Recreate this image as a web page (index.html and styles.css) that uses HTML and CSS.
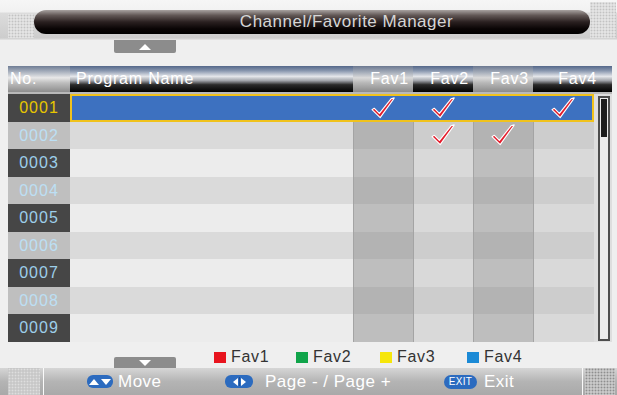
FILE: index.html
```html
<!DOCTYPE html>
<html>
<head>
<meta charset="utf-8">
<link rel="stylesheet" href="styles.css">
</head>
<body>
<div class="screen">
  <div class="top">
    <div class="dots dots-l"></div>
    <div class="pill">Channel/Favorite Manager</div>
    <div class="dots dots-r"></div>
  </div>
  <div class="tabrow"><div class="tab up"><span class="tri-up"></span></div></div>
  <div class="head">
    <div class="h h-no">No.</div>
    <div class="h h-name">Program Name</div>
    <div class="h h-fav light">Fav1</div>
    <div class="h h-fav">Fav2</div>
    <div class="h h-fav light">Fav3</div>
    <div class="h h-fav last">Fav4</div>
  </div>
  <div class="body">
    <div class="rows">
      <div class="row odd sel"><div class="no">0001</div><div class="cells"><div class="name"></div>
        <div class="fav c1"><svg class="chk" viewBox="0 0 24 22" width="24" height="22"><path d="M1 12.6 L3.2 11.2 L8.4 16.4 L20 1.8 L23.2 0.9 L22.2 2.6 L9.2 20.6 Z" fill="#e41d2c" stroke="#fff" stroke-width="1.1" stroke-linejoin="round"/></svg></div>
        <div class="fav c2"><svg class="chk" viewBox="0 0 24 22" width="24" height="22"><path d="M1 12.6 L3.2 11.2 L8.4 16.4 L20 1.8 L23.2 0.9 L22.2 2.6 L9.2 20.6 Z" fill="#e41d2c" stroke="#fff" stroke-width="1.1" stroke-linejoin="round"/></svg></div>
        <div class="fav c3"></div>
        <div class="fav c4"><svg class="chk" viewBox="0 0 24 22" width="24" height="22"><path d="M1 12.6 L3.2 11.2 L8.4 16.4 L20 1.8 L23.2 0.9 L22.2 2.6 L9.2 20.6 Z" fill="#e41d2c" stroke="#fff" stroke-width="1.1" stroke-linejoin="round"/></svg></div>
      </div></div>
      <div class="row even"><div class="no">0002</div><div class="cells"><div class="name"></div>
        <div class="fav c1"></div>
        <div class="fav c2"><svg class="chk" viewBox="0 0 24 22" width="24" height="22"><path d="M1 12.6 L3.2 11.2 L8.4 16.4 L20 1.8 L23.2 0.9 L22.2 2.6 L9.2 20.6 Z" fill="#e41d2c" stroke="#fff" stroke-width="1.1" stroke-linejoin="round"/></svg></div>
        <div class="fav c3"><svg class="chk" viewBox="0 0 24 22" width="24" height="22"><path d="M1 12.6 L3.2 11.2 L8.4 16.4 L20 1.8 L23.2 0.9 L22.2 2.6 L9.2 20.6 Z" fill="#e41d2c" stroke="#fff" stroke-width="1.1" stroke-linejoin="round"/></svg></div>
        <div class="fav c4"></div>
      </div></div>
      <div class="row odd"><div class="no">0003</div><div class="cells"><div class="name"></div><div class="fav c1"></div><div class="fav c2"></div><div class="fav c3"></div><div class="fav c4"></div></div></div>
      <div class="row even"><div class="no">0004</div><div class="cells"><div class="name"></div><div class="fav c1"></div><div class="fav c2"></div><div class="fav c3"></div><div class="fav c4"></div></div></div>
      <div class="row odd"><div class="no">0005</div><div class="cells"><div class="name"></div><div class="fav c1"></div><div class="fav c2"></div><div class="fav c3"></div><div class="fav c4"></div></div></div>
      <div class="row even"><div class="no">0006</div><div class="cells"><div class="name"></div><div class="fav c1"></div><div class="fav c2"></div><div class="fav c3"></div><div class="fav c4"></div></div></div>
      <div class="row odd"><div class="no">0007</div><div class="cells"><div class="name"></div><div class="fav c1"></div><div class="fav c2"></div><div class="fav c3"></div><div class="fav c4"></div></div></div>
      <div class="row even"><div class="no">0008</div><div class="cells"><div class="name"></div><div class="fav c1"></div><div class="fav c2"></div><div class="fav c3"></div><div class="fav c4"></div></div></div>
      <div class="row odd"><div class="no">0009</div><div class="cells"><div class="name"></div><div class="fav c1"></div><div class="fav c2"></div><div class="fav c3"></div><div class="fav c4"></div></div></div>
    </div>
    <div class="scroll"><div class="track"><div class="thumb"></div></div></div>
  </div>
  <div class="legend">
    <div class="tab down"><span class="tri-down"></span></div>
    <div class="litems">
      <div class="litem w1"><span class="sq red"></span>Fav1</div>
      <div class="litem w2"><span class="sq green"></span>Fav2</div>
      <div class="litem w3"><span class="sq yellow"></span>Fav3</div>
      <div class="litem"><span class="sq blue"></span>Fav4</div>
    </div>
  </div>
  <div class="footer">
    <div class="dots fdots-l"></div>
    <div class="fsep"></div>
    <div class="fkeys">
      <div class="fitem f1"><span class="key k-move"><span class="t-up"></span><span class="t-down"></span></span>Move</div>
      <div class="fitem f2"><span class="key k-page"><span class="t-left"></span><span class="kdiv"></span><span class="t-right"></span></span>Page - / Page +</div>
      <div class="fitem f3"><span class="key k-exit">EXIT</span>Exit</div>
    </div>
    <div class="fsep"></div>
    <div class="dots fdots-r"></div>
  </div>
</div>
</body>
</html>
```
FILE: styles.css
```css
html, body {
  margin: 0;
  padding: 0;
}
body {
  background: #efefef;
  font-family: "Liberation Sans", Arial, sans-serif;
}
.screen {
  width: 617px;
  height: 395px;
  overflow: hidden;
  display: flex;
  flex-direction: column;
}
.dots {
  background-color: #e3e3e3;
  background-image: radial-gradient(circle, #c2c2c2 0.8px, transparent 1.1px);
  background-size: 3px 3px;
}
.top {
  height: 40px;
  display: flex;
  align-items: flex-start;
  background: linear-gradient(to bottom, #f6f6f6 0, #f1f1f1 12px, #dcdcdc 13px, #cdcdcd 38px, #e6e6e6 40px);
}
.dots-l {
  width: 26px;
  height: 24px;
  margin: 14px 0 0 8px;
}
.dots-r {
  width: 26px;
  height: 36px;
  margin-top: 2px;
}
.pill {
  box-sizing: border-box;
  width: 556px;
  height: 24px;
  margin-top: 10px;
  border-radius: 12px;
  padding-left: 69px;
  background: linear-gradient(to bottom, #a8a2a0 0%, #625856 22%, #2a2020 50%, #0a0505 78%, #000 100%);
  color: #d6d6d6;
  font-size: 17px;
  letter-spacing: 0.5px;
  line-height: 24px;
  text-align: center;
  white-space: nowrap;
}
.tabrow {
  height: 26px;
  padding-left: 114px;
}
.tab {
  width: 62px;
  height: 13px;
  background: #8c8c8c;
  display: flex;
  align-items: center;
  justify-content: center;
  border-radius: 0 0 2px 2px;
}
.tab.down {
  align-self: flex-end;
  height: 11px;
  border-radius: 2px 2px 0 0;
}
.tri-up {
  width: 0;
  height: 0;
  border-left: 6px solid transparent;
  border-right: 6px solid transparent;
  border-bottom: 6px solid #fff;
}
.tri-down {
  width: 0;
  height: 0;
  border-left: 6px solid transparent;
  border-right: 6px solid transparent;
  border-top: 6px solid #fff;
}
.head {
  display: grid;
  grid-template-columns: 62px 283px 60px 60px 60px 79px;
  height: 26px;
  width: 604px;
  margin-left: 8px;
  border-bottom: 2px solid #b9b9b9;
}
.h {
  box-sizing: border-box;
  color: #fff;
  font-size: 16px;
  letter-spacing: 0.8px;
  line-height: 26px;
  white-space: nowrap;
  background: linear-gradient(to bottom, #54678a 0%, #8795ad 18%, #e4e6ea 40%, #a2a5ab 56%, #2b2b2b 72%, #000 100%);
}
.h-no {
  padding-left: 2px;
  background: linear-gradient(to bottom, #6f7d95 0%, #a8b0bd 22%, #e8e8e8 45%, #bdbdbd 65%, #8d8d8d 100%);
}
.h-name {
  padding-left: 6px;
}
.h-fav {
  text-align: right;
  padding-right: 4px;
}
.h.light {
  background: linear-gradient(to bottom, #6b7890 0%, #a4acb9 24%, #dadada 45%, #b7b7b7 65%, #8b8b8b 100%);
}
.h.last {
  padding-right: 15px;
}
.body {
  display: flex;
  width: 604px;
  margin-left: 8px;
}
.rows {
  width: 586px;
}
.row {
  display: flex;
  height: 27.5px;
}
.no {
  width: 62px;
  text-align: center;
  font-size: 16px;
  letter-spacing: 1px;
  line-height: 27.5px;
}
.odd .no {
  background: #464646;
  color: #9dcfea;
}
.even .no {
  background: #bfbfbf;
  color: #bcdff4;
}
.sel .no {
  color: #e8c600;
}
.cells {
  flex: 1;
  display: grid;
  grid-template-columns: 283px 60px 60px 60px 61px;
}
.odd .name { background: #ececec; }
.even .name { background: #dadada; }
.fav {
  display: flex;
  align-items: center;
  justify-content: center;
  border-left: 1px solid #a4a4a4;
}
.odd .c1, .odd .c3 { background: #bebebe; }
.even .c1, .even .c3 { background: #b3b3b3; }
.odd .c2, .odd .c4 { background: #d9d9d9; }
.even .c2, .even .c4 { background: #cdcdcd; }
.sel .cells {
  background: #3d71c0;
  box-shadow: inset 0 0 0 2px #f0c21c;
}
.sel .name, .sel .fav {
  background: transparent;
  border-left-color: transparent;
}
.chk {
  display: block;
  margin-left: -2px;
}
.scroll {
  width: 18px;
  background: #dedede;
  box-sizing: border-box;
  padding: 2px 2px 0 4px;
}
.track {
  box-sizing: border-box;
  width: 12px;
  height: 245px;
  border: 2px solid #4d4d4d;
  background: #ebebeb;
  padding: 1px;
}
.thumb {
  height: 38px;
  background: #1c1c1c;
}
.legend {
  height: 26.5px;
  display: flex;
  padding-left: 114px;
}
.litems {
  display: flex;
  align-items: center;
  margin-left: 38px;
  padding-top: 5px;
}
.litem {
  display: flex;
  align-items: center;
  font-size: 16px;
  letter-spacing: 0.7px;
  color: #333;
}
.w1 { width: 82px; }
.w2 { width: 84px; }
.w3 { width: 87px; }
.sq {
  width: 12px;
  height: 11px;
  margin-right: 5px;
}
.red { background: #e8141e; }
.green { background: #10a44a; }
.yellow { background: #f6e60a; }
.blue { background: #1b8ad6; }
.footer {
  height: 27px;
  display: flex;
  align-items: center;
  background: linear-gradient(to bottom, #d6d6d6, #b4b4b4 50%, #a9a9a9);
}
.fdots-l {
  width: 32px;
  height: 27px;
  margin-left: 8px;
  background-color: #c8c8c8;
  background-image: radial-gradient(circle, #dedede 0.8px, transparent 1.1px);
}
.fdots-r {
  width: 30px;
  height: 27px;
  margin-left: 2px;
  background-color: #c8c8c8;
  background-image: radial-gradient(circle, #8e8e8e 0.8px, transparent 1.1px);
}
.fsep {
  width: 1px;
  height: 27px;
  background: #fafafa;
  margin-left: 3px;
}
.fkeys {
  display: flex;
  width: 492px;
  margin-left: 43px;
}
.fitem {
  display: flex;
  align-items: center;
  color: #fff;
  font-size: 17px;
  letter-spacing: 0.5px;
  white-space: nowrap;
}
.f1 { width: 138px; }
.f2 { width: 219px; }
.f3 { width: 135px; }
.key {
  display: flex;
  align-items: center;
  justify-content: center;
  gap: 2px;
  height: 13px;
  background: #2c6bbf;
  border-radius: 6px;
}
.k-move { width: 26px; margin-right: 5px; }
.k-page { width: 28px; margin-right: 12px; gap: 1px; }
.k-exit {
  width: 33px;
  height: 14px;
  margin-right: 7px;
  font-size: 10px;
  letter-spacing: 0.3px;
  border-radius: 7px;
}
.t-up {
  border-left: 5px solid transparent;
  border-right: 5px solid transparent;
  border-bottom: 6px solid #fff;
}
.t-down {
  border-left: 5px solid transparent;
  border-right: 5px solid transparent;
  border-top: 6px solid #fff;
}
.t-left {
  border-top: 4px solid transparent;
  border-bottom: 4px solid transparent;
  border-right: 5px solid #fff;
}
.t-right {
  border-top: 4px solid transparent;
  border-bottom: 4px solid transparent;
  border-left: 5px solid #fff;
}
.kdiv {
  width: 1px;
  height: 9px;
  background: #1d4f95;
}
```
